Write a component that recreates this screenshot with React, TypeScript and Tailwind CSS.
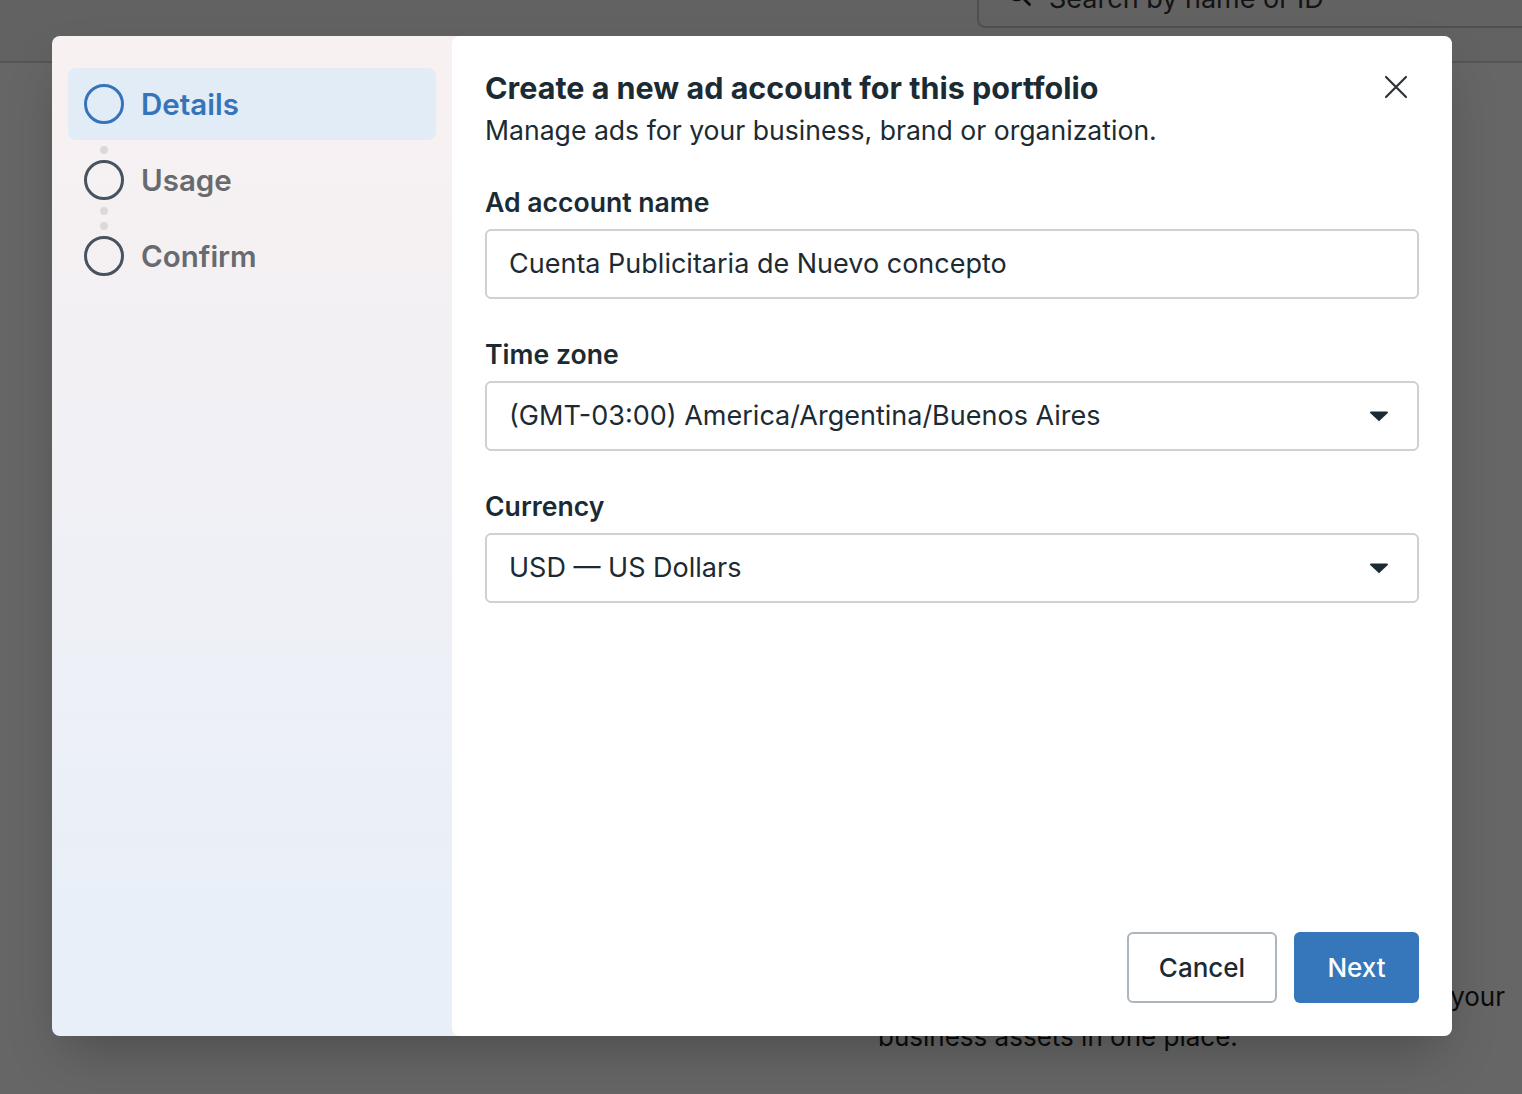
import React from "react";

function Caret() {
  return (
    <svg width="20" height="12" viewBox="0 0 20 12" className="shrink-0">
      <path d="M2 1.5 H18 a1 1 0 0 1 0.8 1.6 L10.8 10.6 a1 1 0 0 1 -1.6 0 L1.2 3.1 A1 1 0 0 1 2 1.5 Z" fill="#1c2b33" />
    </svg>
  );
}

function StepCircle({ active }: { active?: boolean }) {
  return (
    <div
      className={
        active
          ? "h-[40px] w-[40px] shrink-0 rounded-full border-[3px] border-[#3574b8]"
          : "h-[40px] w-[40px] shrink-0 rounded-full border-[3px] border-[#47535f]"
      }
    />
  );
}

function Dot() {
  return <div className="h-[8px] w-[8px] rounded-full bg-[#dcd8d9]" />;
}

export default function App() {
  return (
    <div
      className="relative h-[1094px] w-[1522px] overflow-hidden bg-white"
      style={{ fontFamily: "Inter, 'Noto Sans', sans-serif" }}
    >
      {/* Background page */}
      <div className="flex h-[63px] items-end justify-end border-b-2 border-[#d6d6d6] bg-[#f4f4f4]">
        <div className="-mr-[24px] mb-[33px] flex h-[60px] w-[569px] shrink-0 items-end gap-4 rounded-b-lg border-2 border-t-0 border-[#c8c8c8] pb-[14px] pl-[26px] text-[27px] leading-none text-[#333]">
          <svg width="28" height="28" viewBox="0 0 24 24" fill="none" stroke="#222" strokeWidth="2.4" className="mb-[4px]">
            <circle cx="10" cy="10" r="7" />
            <path d="M15 15 L21 21" strokeLinecap="round" />
          </svg>
          <span>Search by name or ID</span>
        </div>
      </div>
      <div className="ml-[878px] mt-[914px] w-[644px] text-[26px] leading-[40px] text-[#1c1c1c]">
        <div className="pr-[17px] text-right">Bring together your</div>
        <div>business assets in one place.</div>
      </div>

      {/* Overlay */}
      <div className="absolute inset-0 bg-black/60" />

      {/* Modal */}
      <div className="absolute left-[52px] top-[36px] flex h-[1000px] w-[1400px] overflow-hidden rounded-lg bg-gradient-to-b from-[#f8f1f1] to-[#e7eff9] shadow-2xl">
        {/* Left steps */}
        <div className="w-[400px] shrink-0 px-4 pt-8">
          <div className="flex h-[72px] items-center gap-[17px] rounded-lg bg-[#e1ecf7] px-4">
            <StepCircle active />
            <span className="text-[29.5px] font-semibold text-[#3574b8]">Details</span>
          </div>
          <div className="flex h-[20px] w-[72px] flex-col items-center justify-center">
            <Dot />
          </div>
          <div className="flex h-[40px] items-center gap-[17px] px-4">
            <StepCircle />
            <span className="text-[29.5px] font-semibold text-[#676b6f]">Usage</span>
          </div>
          <div className="flex h-[36px] w-[72px] flex-col items-center justify-center gap-[7px]">
            <Dot />
            <Dot />
          </div>
          <div className="flex h-[40px] items-center gap-[17px] px-4">
            <StepCircle />
            <span className="text-[29.5px] font-semibold text-[#676b6f]">Confirm</span>
          </div>
        </div>

        {/* Right content */}
        <div className="flex flex-1 flex-col rounded-lg bg-white px-[33px] pb-[33px] pt-[34px] text-[#1c2b33]">
          <div className="flex items-start justify-between">
            <div>
              <h1 className="text-[30.5px] font-bold leading-[36px]">Create a new ad account for this portfolio</h1>
              <p className="mt-[6px] text-[26.6px] leading-[36px]">Manage ads for your business, brand or organization.</p>
            </div>
            <button className="mr-[11px] mt-[5px]">
              <svg width="24" height="24" viewBox="0 0 24 24" stroke="#2d3338" strokeWidth="2.2" strokeLinecap="round">
                <path d="M2 2 L22 22 M22 2 L2 22" />
              </svg>
            </button>
          </div>

          <div className="mt-[36px] flex flex-col">
            <label className="text-[26.6px] font-semibold leading-[36px]">Ad account name</label>
            <div className="mt-[9px] flex h-[70px] items-center rounded-md border-2 border-[#ced0d4] px-[22px] text-[27px]">
              Cuenta Publicitaria de Nuevo concepto
            </div>
          </div>

          <div className="mt-[37px] flex flex-col">
            <label className="text-[26.6px] font-semibold leading-[36px]">Time zone</label>
            <div className="mt-[9px] flex h-[70px] items-center justify-between rounded-md border-2 border-[#ced0d4] pl-[22px] pr-[28px] text-[27px]">
              <span>(GMT-03:00) America/Argentina/Buenos Aires</span>
              <Caret />
            </div>
          </div>

          <div className="mt-[37px] flex flex-col">
            <label className="text-[26.6px] font-semibold leading-[36px]">Currency</label>
            <div className="mt-[9px] flex h-[70px] items-center justify-between rounded-md border-2 border-[#ced0d4] pl-[22px] pr-[28px] text-[27px]">
              <span>USD — US Dollars</span>
              <Caret />
            </div>
          </div>

          <div className="mt-auto flex justify-end gap-[17px]">
            <button className="h-[71px] w-[150px] rounded-md border-2 border-[#adb5bd] text-[26px] font-medium text-[#1c2b33]">
              Cancel
            </button>
            <button className="h-[71px] w-[125px] rounded-md bg-[#3577ba] text-[26px] font-medium text-white">
              Next
            </button>
          </div>
        </div>
      </div>
    </div>
  );
}
